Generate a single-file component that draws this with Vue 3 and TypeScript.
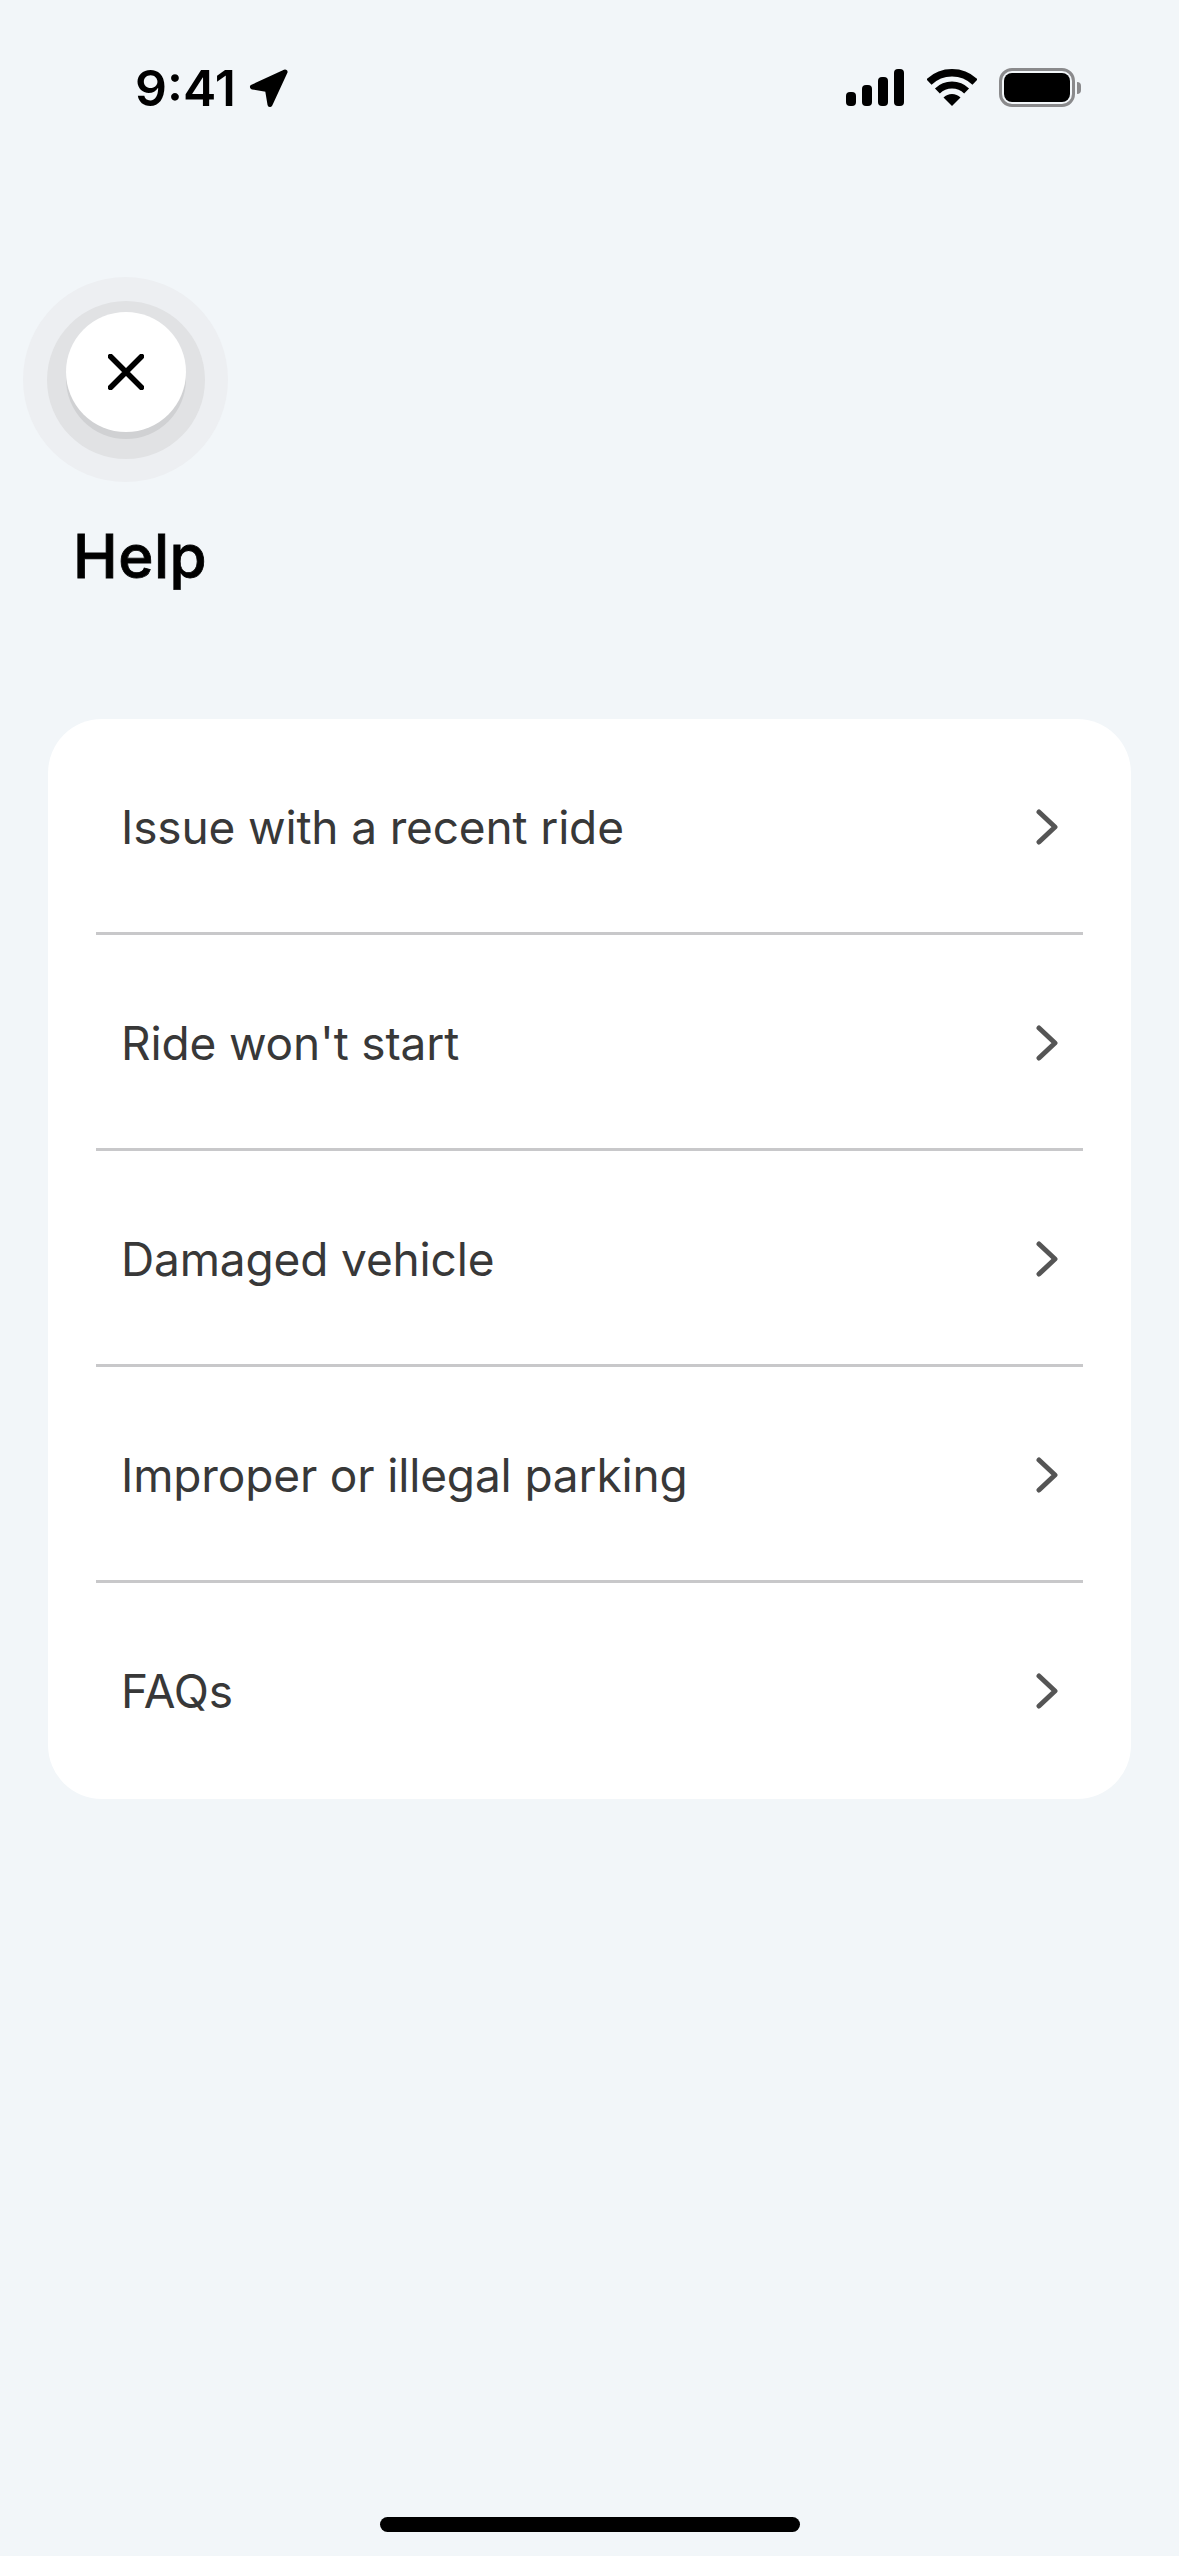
<script setup lang="ts">
const helpItems: string[] = [
  'Issue with a recent ride',
  "Ride won't start",
  'Damaged vehicle',
  'Improper or illegal parking',
  'FAQs',
]
</script>

<template>
  <div class="screen">
    <!-- Status bar -->
    <header class="status-bar">
      <div class="status-left">
        <span class="time">9:41</span>
        <svg class="location" viewBox="0 0 40 40" aria-hidden="true">
          <path d="M36 4 L3.5 19 L18.5 21.5 L21 36.5 Z" />
        </svg>
      </div>
      <div class="status-right">
        <div class="signal" aria-hidden="true">
          <span class="bar bar-1"></span>
          <span class="bar bar-2"></span>
          <span class="bar bar-3"></span>
          <span class="bar bar-4"></span>
        </div>
        <svg class="wifi" viewBox="0 0 50 37" aria-hidden="true">
          <path class="arc" stroke-width="7.5" d="M1.94 13.1 A33.2 33.2 0 0 1 48.06 13.1" />
          <path class="arc" stroke-width="7" d="M10.4 21.9 A21 21 0 0 1 39.6 21.9" />
          <path d="M25 37 L16.5 28.5 A12 12 0 0 1 33.5 28.5 Z" />
        </svg>
        <div class="battery" aria-hidden="true">
          <div class="battery-body"><div class="battery-fill"></div></div>
          <div class="battery-cap"></div>
        </div>
      </div>
    </header>

    <!-- Close button -->
    <div class="close-halo">
      <div class="close-ring">
        <button type="button" class="close-btn" aria-label="Close">
          <svg viewBox="0 0 36 36" width="36" height="36" aria-hidden="true">
            <path d="M2.5 2.5 L33.5 33.5 M33.5 2.5 L2.5 33.5" />
          </svg>
        </button>
      </div>
    </div>

    <h1 class="title">Help</h1>

    <!-- Help menu -->
    <ul class="menu">
      <li v-for="item in helpItems" :key="item" class="menu-item">
        <span class="menu-label">{{ item }}</span>
        <svg class="chevron" viewBox="0 0 22 36" aria-hidden="true">
          <path d="M3 3 L19 18 L3 33" />
        </svg>
      </li>
    </ul>

    <div class="home-indicator"></div>
  </div>
</template>

<style>
html,
body {
  margin: 0;
  background: #f2f6f9;
}
</style>

<style scoped>
.screen {
  display: flex;
  flex-direction: column;
  box-sizing: border-box;
  width: 1179px;
  height: 2556px;
  background: #f2f6f9;
  font-family: Inter, 'Liberation Sans', sans-serif;
  overflow: hidden;
}

/* ── Status bar ────────────────────────────────────────── */
.status-bar {
  display: flex;
  align-items: flex-start;
  justify-content: space-between;
  height: 277px;
  box-sizing: border-box;
  padding: 68px 98px 0 135px;
}

.status-left {
  display: flex;
  align-items: center;
  gap: 13px;
  height: 40px;
}

.time {
  font-size: 50px;
  font-weight: 600;
  line-height: 40px;
  color: #000;
}

.location {
  width: 40px;
  height: 40px;
}

.location path {
  fill: #000;
  stroke: #000;
  stroke-width: 5;
  stroke-linejoin: round;
}

.status-right {
  display: flex;
  align-items: flex-start;
}

.signal {
  display: flex;
  align-items: flex-end;
  gap: 6px;
  height: 37px;
  margin-top: 1px;
}

.bar {
  width: 10px;
  background: #000;
  border-radius: 4px;
}

.bar-1 {
  height: 14px;
}

.bar-2 {
  height: 21px;
}

.bar-3 {
  height: 29px;
}

.bar-4 {
  height: 37px;
}

.wifi {
  width: 50px;
  height: 37px;
  margin: 1px 22px 0 23px;
  fill: #000;
}

.wifi .arc {
  fill: none;
  stroke: #000;
}

.battery {
  display: flex;
  align-items: center;
  gap: 2px;
}

.battery-body {
  box-sizing: border-box;
  width: 76px;
  height: 39px;
  padding: 2px;
  border: 3px solid #8a8a8c;
  border-radius: 13px;
}

.battery-fill {
  width: 100%;
  height: 100%;
  background: #000;
  border-radius: 8px;
}

.battery-cap {
  width: 4px;
  height: 12px;
  background: #8a8a8c;
  border-radius: 0 4px 4px 0;
}

/* ── Close button ──────────────────────────────────────── */
.close-halo {
  display: flex;
  align-items: center;
  justify-content: center;
  flex: none;
  width: 205px;
  height: 205px;
  margin-left: 23px;
  background: #edeff2;
  border-radius: 50%;
}

.close-ring {
  display: flex;
  align-items: center;
  justify-content: center;
  box-sizing: border-box;
  width: 158px;
  height: 158px;
  padding-bottom: 16px;
  background: #e1e2e4;
  border-radius: 50%;
}

.close-btn {
  display: flex;
  align-items: center;
  justify-content: center;
  width: 120px;
  height: 120px;
  padding: 0;
  background: #fff;
  border: none;
  border-radius: 50%;
  box-shadow: 0 7px 0 #d0d1d3;
}

.close-btn path {
  fill: none;
  stroke: #000;
  stroke-width: 5.5;
  stroke-linecap: round;
}

/* ── Title ─────────────────────────────────────────────── */
.title {
  margin: 39px 0 0 73px;
  font-size: 60px;
  font-weight: 500;
  line-height: 70px;
  letter-spacing: 0.5px;
  color: #000;
  -webkit-text-stroke: 0.8px #000;
}

/* ── Menu ──────────────────────────────────────────────── */
.menu {
  flex: none;
  width: 1083px;
  margin: 128px 0 0 48px;
  padding: 0;
  list-style: none;
  background: #fff;
  border-radius: 54px;
}

.menu-item {
  display: flex;
  align-items: center;
  justify-content: space-between;
  box-sizing: border-box;
  height: 216px;
  margin: 0 48px;
  padding: 3px 25px 0 25px;
  border-bottom: 3px solid #c8c8ca;
}

.menu-item:last-child {
  border-bottom-color: transparent;
}

.menu-label {
  font-size: 46px;
  font-weight: 400;
  letter-spacing: -0.15px;
  color: #383838;
}

.chevron {
  width: 22px;
  height: 36px;
}

.chevron path {
  fill: none;
  stroke: #555;
  stroke-width: 5;
  stroke-linecap: round;
  stroke-linejoin: round;
}

/* ── Home indicator ────────────────────────────────────── */
.home-indicator {
  width: 420px;
  height: 15px;
  margin: auto auto 24px;
  background: #000;
  border-radius: 8px;
}
</style>
